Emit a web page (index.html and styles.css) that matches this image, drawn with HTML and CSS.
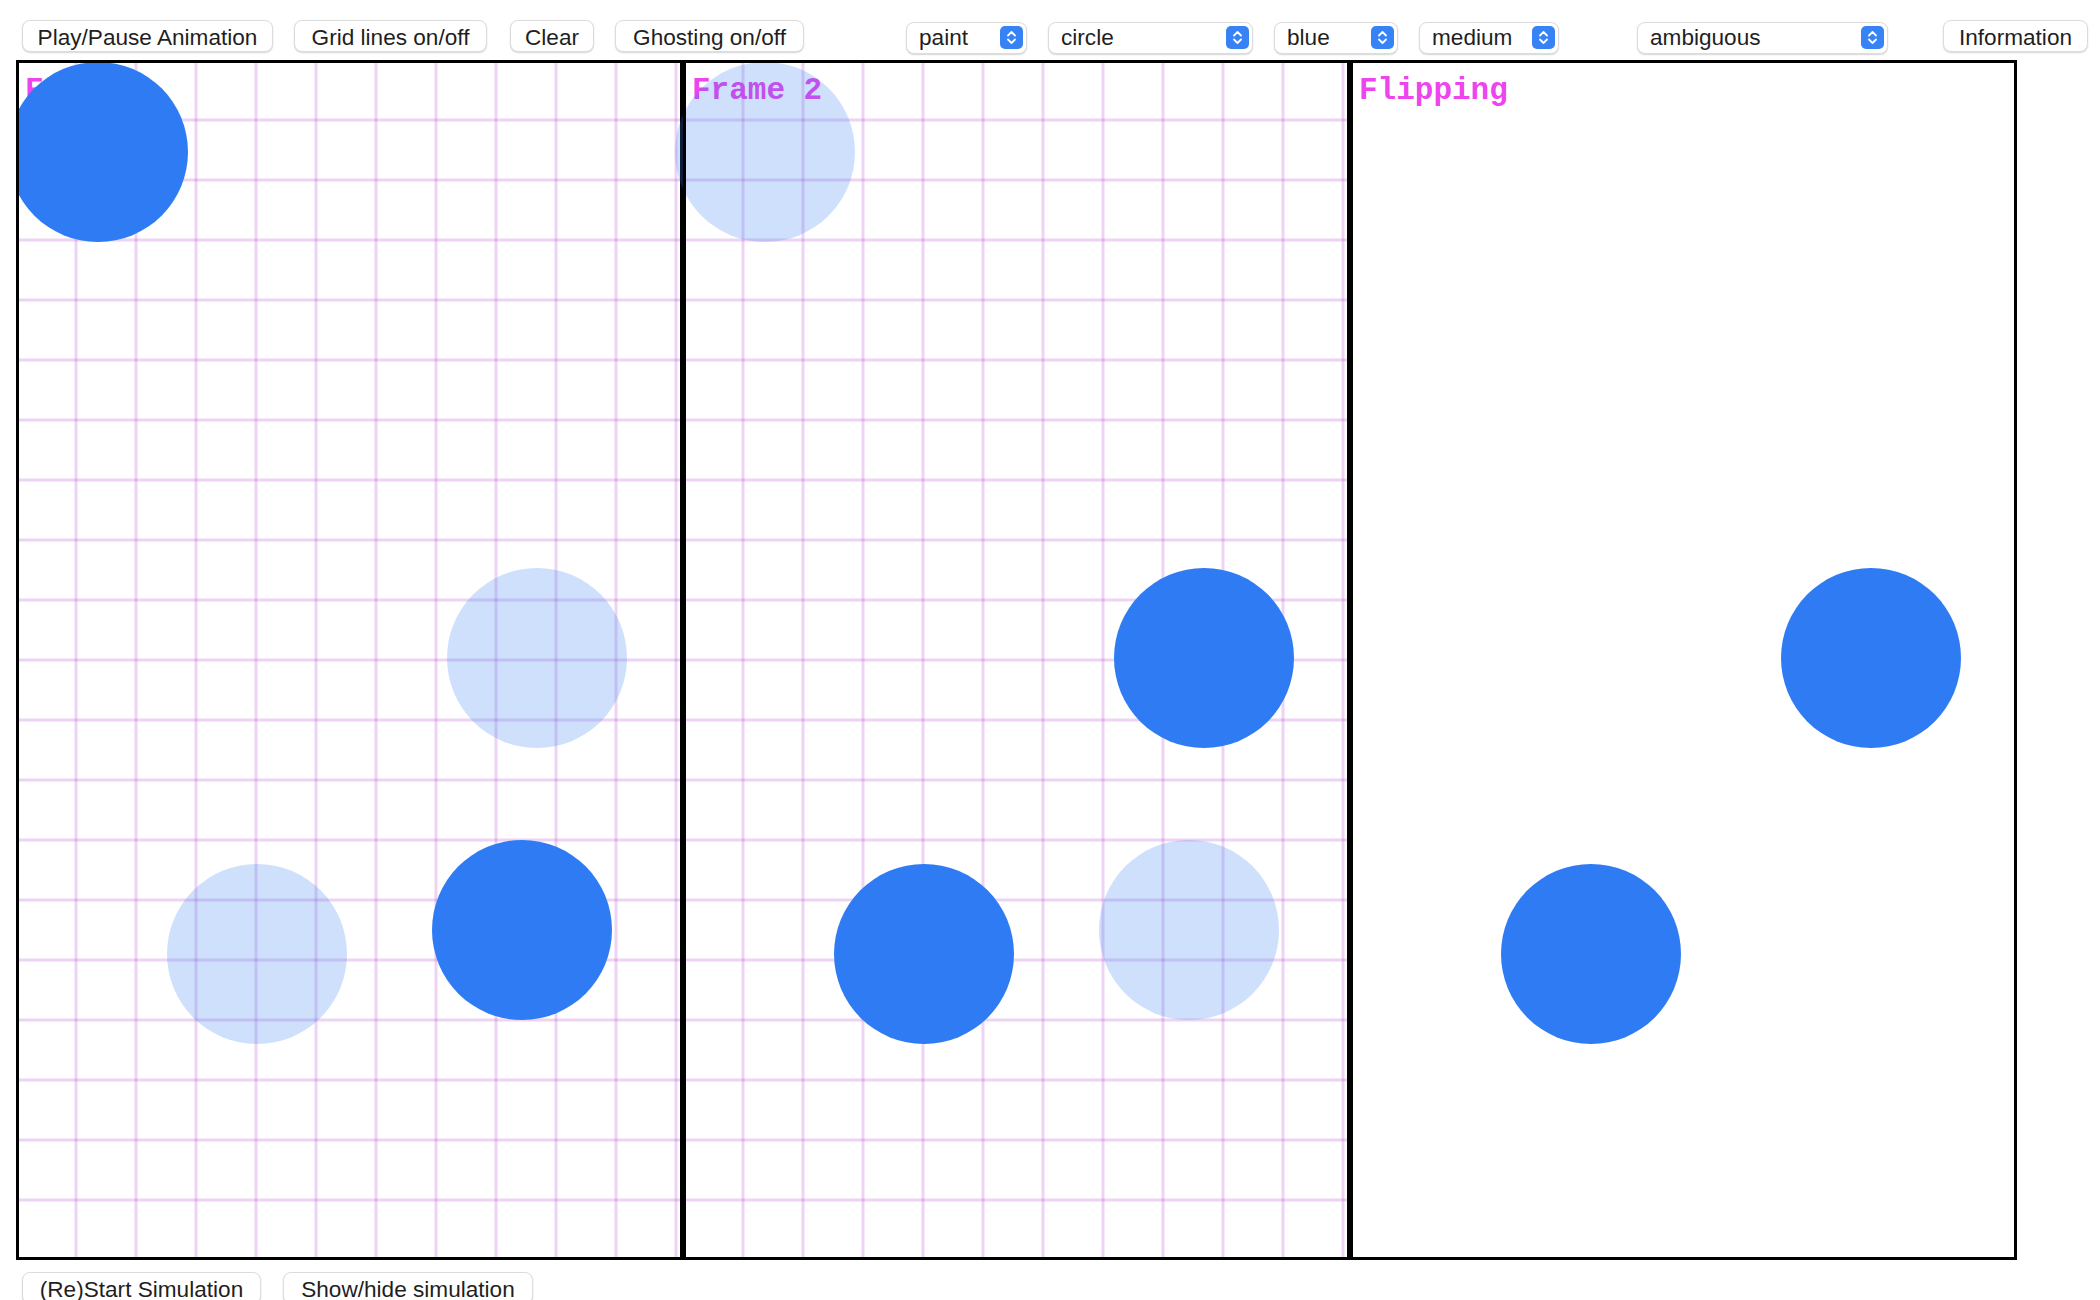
FILE: index.html
```html
<!DOCTYPE html>
<html>
<head>
<meta charset="utf-8">
<title>Flipbook</title>
<link rel="stylesheet" href="styles.css">
</head>
<body>
<div class="page">
  <div class="toolbar">
    <button class="btn w-play">Play/Pause Animation</button>
    <button class="btn w-grid">Grid lines on/off</button>
    <button class="btn w-clear">Clear</button>
    <button class="btn w-ghost">Ghosting on/off</button>

    <label class="sel w-tool gap-lg">
      <select><option>paint</option><option>erase</option></select>
      <svg class="badge" viewBox="0 0 23 23"><rect width="23" height="23" rx="5"/><path d="M8 9.5 11.5 6 15 9.5M8 13.5 11.5 17 15 13.5"/></svg>
    </label>
    <label class="sel w-shape">
      <select><option>circle</option><option>square</option></select>
      <svg class="badge" viewBox="0 0 23 23"><rect width="23" height="23" rx="5"/><path d="M8 9.5 11.5 6 15 9.5M8 13.5 11.5 17 15 13.5"/></svg>
    </label>
    <label class="sel w-color">
      <select><option>blue</option><option>red</option></select>
      <svg class="badge" viewBox="0 0 23 23"><rect width="23" height="23" rx="5"/><path d="M8 9.5 11.5 6 15 9.5M8 13.5 11.5 17 15 13.5"/></svg>
    </label>
    <label class="sel w-size">
      <select><option>medium</option><option>small</option><option>large</option></select>
      <svg class="badge" viewBox="0 0 23 23"><rect width="23" height="23" rx="5"/><path d="M8 9.5 11.5 6 15 9.5M8 13.5 11.5 17 15 13.5"/></svg>
    </label>
    <label class="sel w-mode gap-md">
      <select><option>ambiguous</option><option>unambiguous</option></select>
      <svg class="badge" viewBox="0 0 23 23"><rect width="23" height="23" rx="5"/><path d="M8 9.5 11.5 6 15 9.5M8 13.5 11.5 17 15 13.5"/></svg>
    </label>

    <button class="btn w-info gap-sm">Information</button>
  </div>

  <div class="frames">
    <svg class="frame" viewBox="0 0 667 1200">
      <defs>
        <pattern id="grid" patternUnits="userSpaceOnUse" x="30" y="30" width="60" height="60">
          <line class="gridline" x1="30" y1="0" x2="30" y2="60"/>
          <line class="gridline" x1="0" y1="30" x2="60" y2="30"/>
        </pattern>
      </defs>
      <rect class="bg" width="667" height="1200"/>
      <rect width="667" height="1200" fill="url(#grid)"/>
      <text class="label" x="9" y="39">Frame 1</text>
      <circle class="ghost" cx="521" cy="598" r="90"/>
      <circle class="ghost" cx="241" cy="894" r="90"/>
      <circle class="solid" cx="82" cy="92" r="90"/>
      <circle class="solid" cx="506" cy="870" r="90"/>
      <rect class="edge" x="1.5" y="1.5" width="664" height="1197"/>
    </svg>
    <svg class="frame frame-open" viewBox="0 0 667 1200">
      <rect class="bg" width="667" height="1200"/>
      <rect width="667" height="1200" fill="url(#grid)"/>
      <text class="label" x="9" y="39">Frame 2</text>
      <circle class="solid" cx="521" cy="598" r="90"/>
      <circle class="solid" cx="241" cy="894" r="90"/>
      <circle class="ghost" cx="82" cy="92" r="90"/>
      <circle class="ghost" cx="506" cy="870" r="90"/>
      <rect class="edge" x="1.5" y="1.5" width="664" height="1197"/>
    </svg>
    <svg class="frame" viewBox="0 0 667 1200">
      <rect class="bg" width="667" height="1200"/>
      <text class="label" x="9" y="39">Flipping</text>
      <circle class="solid" cx="521" cy="598" r="90"/>
      <circle class="solid" cx="241" cy="894" r="90"/>
      <rect class="edge" x="1.5" y="1.5" width="664" height="1197"/>
    </svg>
  </div>

  <div class="bottombar">
    <button class="btn w-restart">(Re)Start Simulation</button>
    <button class="btn w-show">Show/hide simulation</button>
  </div>
</div>
</body>
</html>
```

FILE: styles.css
```css
html, body {
  margin: 0;
  padding: 0;
  background: #ffffff;
}

body {
  font-family: "Liberation Sans", Arial, sans-serif;
  color: #1f1f1f;
}

.page {
  display: flex;
  flex-direction: column;
}

.toolbar {
  display: flex;
  align-items: flex-start;
  gap: 21px;
  padding: 20px 0 0 22px;
}

.btn {
  height: 32px;
  box-sizing: border-box;
  padding: 3px 0 0;
  margin: 0;
  font: 22.6px/27px "Liberation Sans", Arial, sans-serif;
  color: #1f1f1f;
  background: #ffffff;
  border: 1px solid #dcdcdc;
  border-radius: 8px;
  box-shadow: 0 1px 1.5px rgba(0, 0, 0, 0.16);
  text-align: center;
  white-space: nowrap;
}

.w-play { width: 251px; }
.w-grid { width: 193px; }
.w-clear { width: 84px; margin-left: 2px; }
.w-ghost { width: 189px; }
.w-info { width: 145px; }
.w-restart { width: 239px; }
.w-show { width: 250px; }

.sel {
  position: relative;
  display: flex;
  height: 32px;
  margin-top: 2px;
  box-sizing: border-box;
  background: #ffffff;
  border: 1px solid #dcdcdc;
  border-radius: 8px;
  box-shadow: 0 1px 1.5px rgba(0, 0, 0, 0.16);
}

.sel select {
  appearance: none;
  -webkit-appearance: none;
  width: 100%;
  height: 100%;
  margin: 0;
  border: 0;
  outline: none;
  background: transparent;
  padding: 0 30px 1px 12px;
  font: 22.6px "Liberation Sans", Arial, sans-serif;
  color: #1f1f1f;
}

.sel .badge {
  position: absolute;
  right: 3px;
  top: 3px;
  width: 23px;
  height: 23px;
  pointer-events: none;
}

.badge rect {
  fill: #3782f5;
}

.badge path {
  fill: none;
  stroke: #ffffff;
  stroke-width: 1.8;
  stroke-linecap: round;
  stroke-linejoin: round;
}

.w-tool { width: 121px; }
.w-shape { width: 205px; }
.w-color { width: 124px; }
.w-size { width: 140px; }
.w-mode { width: 251px; }

.gap-lg { margin-left: 81px; }
.gap-md { margin-left: 57px; }
.gap-sm { margin-left: 34px; }

.frames {
  display: flex;
  margin: 6px 0 0 16px;
}

.frame {
  display: block;
  width: 667px;
  height: 1200px;
  flex: none;
  overflow: hidden;
}

.frame-open {
  overflow: visible;
}

.bg {
  fill: #ffffff;
}

.gridline {
  stroke: rgba(170, 40, 200, 0.2);
  stroke-width: 3;
}

.label {
  font: bold 31px "Liberation Mono", "Courier New", monospace;
  fill: #ee44ee;
}

.solid {
  fill: #2f7bf3;
}

.ghost {
  fill: rgba(47, 123, 243, 0.235);
}

.edge {
  fill: none;
  stroke: #000000;
  stroke-width: 3;
}

.bottombar {
  display: flex;
  gap: 22px;
  margin-top: 12px;
  padding-left: 22px;
}
```
